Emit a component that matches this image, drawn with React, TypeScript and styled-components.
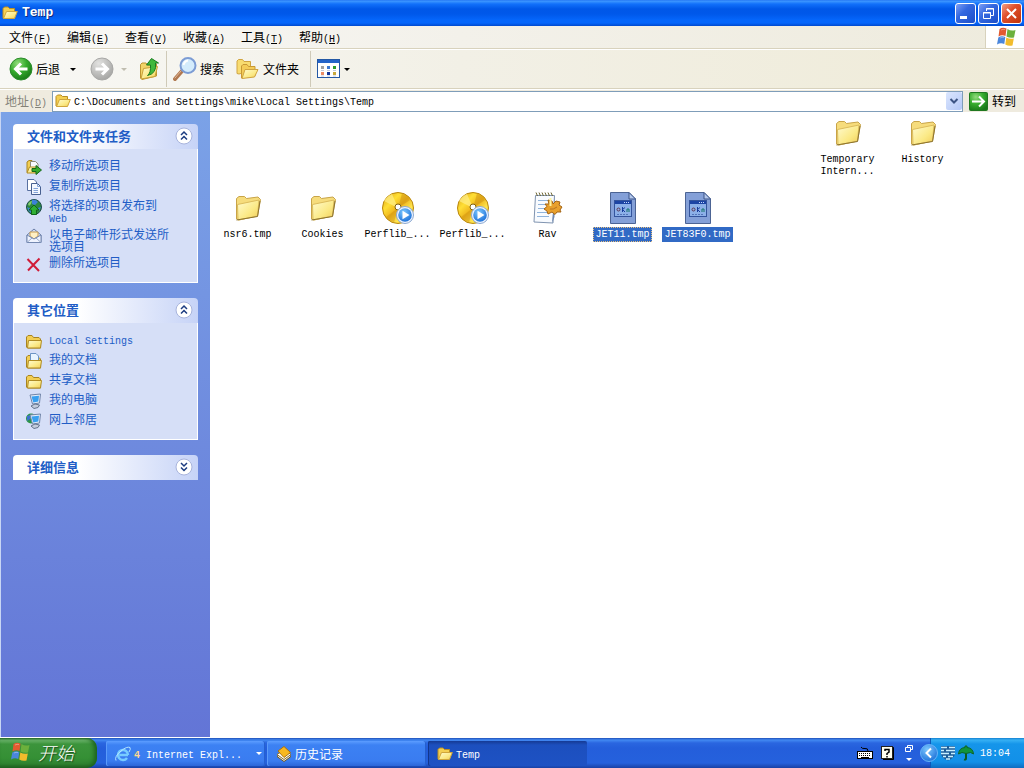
import React from 'react';
import styled, { createGlobalStyle, css } from 'styled-components';

const mono = css`
  font-family: 'Liberation Mono', 'Noto Sans CJK SC', monospace;
  font-size: 10px;
`;

const GlobalStyle = createGlobalStyle`
  * { box-sizing: border-box; }
  body {
    margin: 0;
    font-family: 'Noto Sans CJK SC', sans-serif;
    font-size: 12px;
    line-height: 12px;
    color: #000;
  }
  button {
    font: inherit;
    color: inherit;
    border: 0;
    padding: 0;
    background: none;
  }
  svg { display: block; flex: none; }
`;

const Latin = styled.span`
  ${mono}
  line-height: 8px;
`;

const Desktop = styled.div`
  min-height: 100vh;
  display: flex;
  flex-direction: column;
`;

/* ---------- title bar ---------- */

const TitleBar = styled.header`
  height: 26px;
  display: flex;
  align-items: center;
  gap: 4px;
  padding: 0 2px;
  background: linear-gradient(#1c6cf0 0, #3f98ff 1px, #1170fa 4px, #0057e8 9px, #0058ea 14px, #0566fb 20px, #0566fb 23px, #0049ce 26px);
`;

const Title = styled.h1`
  ${mono}
  flex: 1;
  margin: 0;
  font-size: 13px;
  font-weight: bold;
  color: #fff;
  text-shadow: 1px 1px #0a2a80;
`;

const Caption = styled.div`
  display: flex;
  gap: 2px;
`;

const CaptionButton = styled.button<{ $close?: boolean }>`
  width: 21px;
  height: 21px;
  border: 1px solid #fff;
  border-radius: 3px;
  background: ${(p) =>
    p.$close
      ? 'linear-gradient(135deg, #f0a088, #e0502c 40%, #c0340c)'
      : 'linear-gradient(135deg, #7d9ff5, #3468e0 40%, #1c4ec8)'};
`;

/* ---------- menu, tool bar and address bar ---------- */

const MenuBar = styled.nav`
  height: 23px;
  display: flex;
  align-items: stretch;
  background: linear-gradient(90deg, #f8f8f6, #f3f1ea 45%, #eeebdd);
  border-bottom: 1px solid #d8d2bd;
`;

const MenuItems = styled.div`
  flex: 1;
  display: flex;
  gap: 16px;
  padding: 0 9px;
`;

const MenuItem = styled.button`
  width: 42px;
  white-space: nowrap;
`;

const Throbber = styled.div`
  width: 39px;
  padding: 1px 10px;
  background: #fff;
  border-left: 1px solid #d8d2bd;
`;

const ToolBar = styled.div`
  height: 40px;
  display: flex;
  align-items: center;
  padding: 0 9px;
  border-top: 1px solid #fff;
  border-bottom: 1px solid #d8d2bd;
  background: linear-gradient(90deg, #f8f8f5, #f2f0e6 45%, #efebd8);
`;

const ToolButton = styled.button<{ $width: number }>`
  width: ${(p) => p.$width}px;
  height: 32px;
  flex: none;
  display: flex;
  align-items: center;
  gap: 3px;
  white-space: nowrap;
`;

const DropArrow = styled.span<{ $color?: string; $width?: number }>`
  width: ${(p) => p.$width ?? 6}px;
  display: flex;
  justify-content: center;
  &::after {
    content: '';
    border: 3px solid transparent;
    border-top-color: ${(p) => p.$color ?? '#000'};
    border-bottom: 0;
  }
`;

const Separator = styled.span`
  width: 1px;
  height: 36px;
  margin-right: 6px;
  background: #cfcab8;
`;

const AddressBar = styled.form`
  height: 23px;
  display: flex;
  align-items: center;
  gap: 6px;
  padding: 0 8px 0 5px;
  background: #efebdf;
  border-top: 1px solid #fff;
`;

const AddressLabel = styled.label`
  width: 41px;
  white-space: nowrap;
  color: #848278;
`;

const AddressField = styled.div`
  flex: 1;
  height: 21px;
  display: flex;
  align-items: center;
  gap: 3px;
  padding: 0 0 0 2px;
  background: #fff;
  border: 1px solid #7f9db9;
`;

const AddressInput = styled.input`
  ${mono}
  flex: 1;
  min-width: 0;
  height: 18px;
  border: 0;
  padding: 2px 0 0;
  outline: none;
  background: transparent;
  color: #000;
`;

const AddressDrop = styled.button`
  width: 16px;
  height: 18px;
  display: flex;
  align-items: center;
  justify-content: center;
  border-radius: 2px;
  background: linear-gradient(135deg, #dbe6fe, #b4c8f6);
`;

const GoButton = styled.button`
  display: flex;
  align-items: center;
  gap: 4px;
`;

/* ---------- task pane ---------- */

const Body = styled.div`
  flex: 1;
  display: flex;
  align-items: stretch;
  padding-bottom: 1px;
  background: #fff;
`;

const SidePane = styled.aside`
  width: 210px;
  flex: none;
  display: flex;
  flex-direction: column;
  gap: 15px;
  padding: 12px;
  border-left: 1px solid #c8d6f4;
  background: linear-gradient(#7ba2e7, #6375d6);
`;

const PanelHeader = styled.h2`
  height: 25px;
  display: flex;
  align-items: center;
  justify-content: space-between;
  margin: 0;
  padding: 0 5px 2px 14px;
  border-radius: 4px 4px 0 0;
  background: linear-gradient(90deg, #fff 35%, #c6d3f7);
  color: #215dc6;
  font-size: 13px;
  font-weight: bold;
`;

const PanelList = styled.ul`
  list-style: none;
  margin: 0;
  padding: 10px 12px;
  display: flex;
  flex-direction: column;
  gap: 4px;
  background: #d6dff7;
  border: 1px solid #fff;
  border-top: 0;
`;

const TaskLink = styled.a`
  min-height: 16px;
  display: flex;
  align-items: flex-start;
  gap: 7px;
  color: #215dc6;
  text-decoration: none;
  span { max-width: 125px; }
`;

/* ---------- file view ---------- */

const FileView = styled.main`
  flex: 1;
  display: grid;
  grid-template-columns: repeat(auto-fill, 75px);
  grid-auto-rows: 75px;
  padding: 5px 0 0;
`;

const FileItem = styled.button<{ $column?: number }>`
  ${(p) => p.$column && `grid-column: ${p.$column};`}
  display: flex;
  flex-direction: column;
  align-items: center;
  gap: 3px;
`;

const FileLabel = styled.span<{ $selected?: boolean; $focused?: boolean }>`
  ${mono}
  max-width: 72px;
  padding: 1px 1px 0;
  line-height: 12px;
  border: 1px ${(p) => (p.$focused ? 'dotted #e8c080' : 'solid transparent')};
  background: ${(p) => (p.$selected ? '#316ac5' : 'transparent')};
  color: ${(p) => (p.$selected ? '#fff' : '#000')};
`;

/* ---------- task bar ---------- */

const TaskBar = styled.footer`
  height: 30px;
  display: flex;
  align-items: stretch;
  background: linear-gradient(#1f4fb8 0, #4289f2 2px, #2a66e0 5px, #245edb 10px, #2561dd 25px, #1941a5 30px);
`;

const StartButton = styled.button`
  width: 97px;
  display: flex;
  align-items: center;
  gap: 8px;
  padding: 0 0 2px 10px;
  border-radius: 0 10px 10px 0;
  background: linear-gradient(#2a6b2a 0, #6fb86f 2px, #3c943c 6px, #359035 20px, #2e8230 26px, #1f5f20 30px);
  box-shadow: inset -3px 0 4px #1d641f;
  color: #fff;
  font-size: 18px;
  font-style: italic;
  font-weight: 300;
  line-height: 20px;
  text-shadow: 1px 1px 1px #1c4a1c;
`;

const Tasks = styled.div`
  flex: 1;
  display: flex;
  gap: 2px;
  padding: 3px 0 2px 9px;
`;

const TaskButton = styled.button<{ $active?: boolean }>`
  width: 159px;
  display: flex;
  align-items: center;
  gap: 3px;
  padding: 0 3px 0 9px;
  border-radius: 2px;
  color: #fff;
  white-space: nowrap;
  background: ${(p) =>
    p.$active
      ? 'linear-gradient(#153a94, #1c4fbe 4px, #1e52c4)'
      : 'linear-gradient(#5c9dff, #3c81f3 4px, #3a7cf0 20px, #2c66d8)'};
  box-shadow: ${(p) => (p.$active ? 'inset 1px 0 #12368c' : 'inset 1px 0 #5b9bfa, inset -1px 0 #2560cf')};
`;

const TaskText = styled.span`
  flex: 1;
  text-align: left;
`;

const Count = styled.b`
  color: #ffd890;
`;

const LanguageBar = styled.div`
  display: flex;
  align-items: center;
  gap: 8px;
  padding: 0 17px 0 0;
`;

const LanguageControls = styled.div`
  display: flex;
  flex-direction: column;
  align-items: center;
  gap: 6px;
  padding-left: 3px;
`;

const Tray = styled.div`
  width: 94px;
  display: flex;
  align-items: center;
  gap: 2px;
  background: linear-gradient(#1480d0 0, #36b0f4 2px, #1595ea 6px, #1290e8 24px, #0f6cc0 30px);
  box-shadow: inset 1px 0 #0c58b8;
  color: #fff;
`;

const TrayExpand = styled.button`
  margin-left: -10px;
`;

const Clock = styled.time`
  ${mono}
  flex: 1;
  padding: 2px 0 0 4px;
`;

/* ---------- drawings ---------- */

const Gradients = () => (
  <svg width="0" height="0" style={{ position: 'absolute' }} aria-hidden="true">
    <defs>
      <linearGradient id="folder" x1="0" y1="0" x2="1" y2="1">
        <stop offset="0" stopColor="#fffbd0" />
        <stop offset="0.6" stopColor="#fbe985" />
        <stop offset="1" stopColor="#f0cc58" />
      </linearGradient>
      <linearGradient id="gold" x1="0" y1="0" x2="1" y2="1">
        <stop offset="0" stopColor="#d99a10" />
        <stop offset="0.3" stopColor="#ffdf35" />
        <stop offset="0.5" stopColor="#eeb41c" />
        <stop offset="0.7" stopColor="#ffe650" />
        <stop offset="1" stopColor="#d29210" />
      </linearGradient>
      <radialGradient id="green" cx="0.35" cy="0.25" r="0.8">
        <stop offset="0" stopColor="#92dc7c" />
        <stop offset="0.5" stopColor="#36ac2e" />
        <stop offset="1" stopColor="#187818" />
      </radialGradient>
      <radialGradient id="grey" cx="0.35" cy="0.25" r="0.8">
        <stop offset="0" stopColor="#e2e2e0" />
        <stop offset="1" stopColor="#a4a4a2" />
      </radialGradient>
      <radialGradient id="blue" cx="0.4" cy="0.3" r="0.8">
        <stop offset="0" stopColor="#7cc8ff" />
        <stop offset="1" stopColor="#1468d4" />
      </radialGradient>
    </defs>
  </svg>
);

const Flag = () => (
  <svg width="20" height="20" viewBox="0 0 20 20">
    <path d="M3.500 2 Q6.500 0 10.500 1.500 L9.500 9 Q6 7.500 2.500 9.500Z" fill="#e25a30" />
    <path d="M11.500 2 Q15 4.500 19.500 3 L18 10.500 Q14 11.500 10.500 9.500Z" fill="#6cb03c" />
    <path d="M2.300 10.500 Q5.500 8.500 9.300 10 L8.300 17 Q4.500 15.500 1 17.500Z" fill="#4a86dc" />
    <path d="M10.300 10.500 Q14 12.500 17.800 11.500 L16.500 18.500 Q12.500 19.500 9.300 17.500Z" fill="#f2bc2c" />
    <path d="M5 3 Q7 2 9 2.500 M4 11 Q6 10 8 10.500" stroke="#fff" opacity="0.350" fill="none" />
  </svg>
);

const LargeFolder = () => (
  <svg width="32" height="32" viewBox="0 0 32 32">
    <path d="M4.500 27 V6.500 L7 4.500 H12.500 L14.500 6.500 L26 5 L28.500 7.500 L25.500 24 L7 28Z" fill="#f6dc7c" stroke="#c8a448" />
    <path d="M5.500 12.500 L27 8 L25.500 24 L6 28Z" fill="url(#folder)" stroke="#dcbc5c" />
    <path d="M4.500 28 L25.500 24.500 L28 9" stroke="#8c7430" fill="none" />
  </svg>
);

const SmallFolder = ({ children }: { children?: React.ReactNode }) => (
  <svg width="16" height="16" viewBox="0 0 16 16">
    <path d="M0.500 14 V4 L2 2.500 H6 L7.500 4.500 H13 L14.500 6 V15 H1.500Z" fill="#f2ce54" stroke="#a88420" />
    {children}
    <path d="M1.500 15 L2.500 7.500 H15.500 L14.500 15Z" fill="url(#folder)" stroke="#b08c24" />
  </svg>
);

const OpenFolder = () => (
  <svg width="16" height="16" viewBox="0 0 16 16">
    <path d="M1 13 V3.500 L2.500 2 H6 L7.500 3.500 H12.500 V7 L12 13Z" fill="#f4cf52" stroke="#b98e22" />
    <path d="M1.500 13.500 L4.500 6.500 H15.300 L12.500 13.500Z" fill="url(#folder)" stroke="#d0a63c" />
  </svg>
);

const Disc = () => (
  <svg width="32" height="32" viewBox="0 0 32 32">
    <circle cx="16" cy="16" r="15.500" fill="url(#gold)" stroke="#b8860e" />
    <path d="M16 16 L2 9 A15 15 0 0 1 10 2Z" fill="#fff08c" opacity="0.700" />
    <path d="M16 16 L20 1.500 A15 15 0 0 1 28 8Z" fill="#c88c10" opacity="0.450" />
    <path d="M16 16 L4 25 A15 15 0 0 0 12 30.500Z" fill="#c88c10" opacity="0.400" />
    <circle cx="16" cy="15" r="3" fill="#fff" stroke="#806010" />
    <circle cx="23" cy="23" r="8.500" fill="#eef4ff" stroke="#8ca8d0" />
    <circle cx="23" cy="23" r="6.800" fill="url(#blue)" />
    <path d="M20.500 18.800 L27.500 23 L20.500 27.200Z" fill="#fff" />
  </svg>
);

const ScriptPad = () => (
  <svg width="32" height="32" viewBox="0 0 32 32">
    <path d="M3.500 3.500 H22.500 L21 31 L2 30Z" fill="#f8fbff" stroke="#8094b0" />
    <path d="M22.500 4 V25 L20 31 Z" fill="#7088b0" />
    <path d="M4 0.500 L5.500 4 M7 0.500 L8.500 4 M10 0.500 L11.500 4 M13 0.500 L14.500 4 M16 0.500 L17.500 4 M19 0.500 L20.500 4" stroke="#6c6430" />
    <path d="M6 8.500 H18 M6 12.500 H14 M6 16.500 H13 M5 20.500 H16 M5 24.500 H17" stroke="#90b4dc" />
    <path d="M16 8 L20 9 L21 12 L24 9 L28 10 L27 13 L30 15 L28 18 L29 20 L25 20 L23 22.500 L20 20 L16 22 L15 19 L12 17 L15 14.500 L13 12 L17 12Z" fill="#e8a02c" stroke="#a46414" />
    <path d="M18.500 6 V14" stroke="#fff4a0" strokeWidth="2" />
    <path d="M18 17 Q21 18 25 15" stroke="#b87420" fill="none" />
  </svg>
);

const TempFile = () => (
  <svg width="32" height="32" viewBox="0 0 32 32">
    <path d="M3.500 0.500 H22 L28.500 7 V31.500 H3.500Z" fill="#84a0d8" stroke="#4c6494" />
    <path d="M22 0.500 V7 H28.500Z" fill="#b4c8ec" stroke="#3c5488" />
    <rect x="7.500" y="8.500" width="17" height="16" fill="#8cb0e8" stroke="#34549c" />
    <path d="M8 10.500 H24" stroke="#1c44a4" strokeWidth="3" />
    <path d="M17 10.500 H23" stroke="#c4d8ff" strokeDasharray="1 1" />
    <circle cx="11.500" cy="17.500" r="1.500" fill="none" stroke="#5c3450" />
    <path d="M15.500 15 V20 M18 15.500 L15.500 17.500 L18 20" stroke="#183c9c" fill="none" />
    <path d="M20 20 V17 H22 V20" stroke="#14746c" fill="none" />
    <path d="M10 22.500 H22" stroke="#5474b8" strokeDasharray="2 1" />
  </svg>
);

const RoundArrow = ({ forward }: { forward?: boolean }) => (
  <svg width="24" height="24" viewBox="0 0 24 24">
    <circle cx="12" cy="12" r="11" fill={forward ? 'url(#grey)' : 'url(#green)'} stroke={forward ? '#a8a8a6' : '#2c8c2c'} />
    <path
      d={forward ? 'M5.500 12 H17 M12 6.500 L17.500 12 L12 17.500' : 'M18.500 12 H7 M12 6.500 L6.500 12 L12 17.500'}
      fill="none"
      stroke="#fff"
      strokeWidth="3"
    />
  </svg>
);

const UpFolder = () => (
  <svg width="21" height="24" viewBox="0 0 21 24">
    <path d="M1.500 21 V7.500 L3 6 H7 L8.500 8 L17.500 7 V19 L3 22.500Z" fill="#f2d468" stroke="#bc9430" />
    <path d="M2 22 L4.500 11.500 L18.500 9.500 L16 19.500Z" fill="url(#folder)" stroke="#c8a038" />
    <path d="M8.500 18.500 Q12 16 11.500 8 H7.500 L12.500 1.500 L19.500 6 H16.500 Q18 16.500 8.500 18.500Z" fill="#40b83c" stroke="#187c20" />
  </svg>
);

const Magnifier = () => (
  <svg width="24" height="24" viewBox="0 0 24 24">
    <path d="M2 22 L9 14" stroke="#b07850" strokeWidth="4" strokeLinecap="round" />
    <path d="M2 21 L8 14" stroke="#e0b898" strokeLinecap="round" />
    <circle cx="15" cy="8.500" r="7.500" fill="#d4ecfc" stroke="#7c9cd4" strokeWidth="2" />
    <path d="M10.500 8 Q11.500 4 15 3.500" stroke="#fff" strokeWidth="2" fill="none" />
  </svg>
);

const Folders = () => (
  <svg width="24" height="24" viewBox="0 0 24 24">
    <path d="M1 16.500 V4 L2.500 2.500 H6.500 L8 4.500 H14.500 V14 L3 17Z" fill="#f8dc70" stroke="#d0a440" />
    <path d="M5.500 21 V9 L7 7.500 H11 L12.500 9.500 H19 V19Z" fill="#f4cc58" stroke="#c89834" />
    <path d="M6 21.500 L9 12.500 H22 L18.500 20Z" fill="url(#folder)" stroke="#d0a440" />
  </svg>
);

const Views = () => (
  <svg width="24" height="20" viewBox="0 0 24 20">
    <rect x="0.500" y="0.500" width="22" height="18" fill="#fff" stroke="#2458a4" />
    <rect x="1" y="1" width="21" height="3" fill="#2464c8" />
    <path d="M4 8.500 H7" stroke="#a0a0a0" strokeWidth="3" />
    <path d="M10 8.500 H13" stroke="#3c78d0" strokeWidth="3" />
    <path d="M16 8.500 H19" stroke="#2c9c2c" strokeWidth="3" />
    <path d="M4 14.500 H7" stroke="#ec8c64" strokeWidth="3" />
    <path d="M10 14.500 H13" stroke="#14389c" strokeWidth="3" />
    <path d="M16 14.500 H19" stroke="#c8a83c" strokeWidth="3" />
    <path d="M4 11.500 H7 M10 11.500 H13 M16 11.500 H19 M4 17 H7 M10 17 H13 M16 17 H19" stroke="#c4ccdc" />
  </svg>
);

const Chevrons = ({ down }: { down?: boolean }) => (
  <svg width="18" height="18" viewBox="0 0 18 18">
    <circle cx="9" cy="9" r="8" fill="#fff" stroke="#a8b4dc" />
    <path
      d={down ? 'M6 5 L9 8 L12 5 M6 9.500 L9 12.500 L12 9.500' : 'M6 8 L9 5 L12 8 M6 12.500 L9 9.500 L12 12.500'}
      fill="none"
      stroke="#1c3c80"
      strokeWidth="1.500"
    />
  </svg>
);

const MoveIcon = () => (
  <svg width="16" height="16" viewBox="0 0 16 16">
    <path d="M1 13.500 V3 L3 1.500 H6 V13.500Z" fill="#f2ce54" stroke="#a88420" />
    <path d="M4.500 2.500 H9.500 L12 5 V12.500 H4.500Z" fill="#f8faff" stroke="#8c8c78" />
    <path d="M1 14 L3.500 8 H12 V14Z" fill="url(#folder)" stroke="#b08c24" />
    <path d="M6 9.500 H10 V6.500 L15.500 11 L10 15.500 V12.500 H6Z" fill="#38ac2c" stroke="#146818" />
  </svg>
);

const CopyIcon = () => (
  <svg width="16" height="16" viewBox="0 0 16 16">
    <path d="M1.500 0.500 H8 L10.500 3 V11.500 H1.500Z" fill="#fff" stroke="#5870a0" />
    <path d="M5.500 4.500 H11.500 L14.500 7.500 V15.500 H5.500Z" fill="#f4f8ff" stroke="#486090" />
    <path d="M11.500 4.500 V7.500 H14.500 M7.500 9.500 H12 M7.500 11.500 H12 M7.500 13.500 H12" fill="none" stroke="#84a4d8" />
  </svg>
);

const GlobeIcon = () => (
  <svg width="16" height="16" viewBox="0 0 16 16">
    <circle cx="8" cy="8" r="7.500" fill="#2c8840" stroke="#1c4c48" />
    <path d="M6 1 Q10 0 12 3 L9 6 L6 5Z M1 8 Q2 12 5 14 L5 10Z M15 8 L12 9 L13 12Z" fill="#3c80d8" />
    <path d="M2 5 Q4 1.500 6 2 L5 5 L3 7Z" fill="#84cc70" />
    <path d="M5.500 15.500 V11 H3 L8 6 L13 11 H10.500 V15.500Z" fill="#30b034" stroke="#106418" />
  </svg>
);

const MailIcon = () => (
  <svg width="16" height="16" viewBox="0 0 16 16">
    <path d="M1 7 L8 1 L15 7 V14.500 H1Z" fill="#d0dcf4" stroke="#6c80a8" />
    <path d="M4 8 V4 H12 V8 L8 11Z" fill="#fff0c4" stroke="#c89c50" />
    <path d="M1 7 L8 11 L15 7 V14.500 H1Z" fill="#f0f4ff" stroke="#7488b0" />
    <path d="M1.500 14 L6 10 M14.500 14 L10 10" stroke="#94a8cc" />
  </svg>
);

const DeleteIcon = () => (
  <svg width="16" height="16" viewBox="0 0 16 16">
    <path d="M1.500 3 L13 15 M13.500 2.500 L2 14.500" stroke="#d01c38" strokeWidth="2" />
  </svg>
);

const ComputerIcon = ({ network }: { network?: boolean }) => (
  <svg width="16" height="16" viewBox="0 0 16 16">
    {network && (
      <>
        <circle cx="5" cy="5.500" r="5" fill="#2c9448" />
        <path d="M1 3 L5 2 L4 6 L1 8Z" fill="#3c70d0" />
      </>
    )}
    <path d="M4 2 L14.500 1 L13.500 10 L6.500 11Z" fill="#e4ecf8" stroke="#7084a8" />
    <path d="M5.500 3.500 L13 2.800 L12.300 8.500 L7.300 9.400Z" fill="#38a0f0" />
    <path d="M5 13 L9 11 L13.500 12 L12 14.500 L8 15.500Z" fill="#c4ccdc" stroke="#64748c" />
  </svg>
);

const IeIcon = () => (
  <svg width="16" height="16" viewBox="0 0 16 16">
    <path d="M13 9 H4.500 M13 9 A5 5 0 1 0 12 12" fill="none" stroke="#78ccff" strokeWidth="2.500" />
    <path d="M1 14.500 Q-1 11 6 5 Q12 0 15 1.500 Q16 3 14 6" fill="none" stroke="#b4e4ff" />
  </svg>
);

const StackIcon = () => (
  <svg width="16" height="16" viewBox="0 0 16 16">
    <path d="M1 10.500 L8 15.500 L15 10.500 L8 6Z" fill="#f0f0e8" stroke="#705820" />
    <path d="M1 8.500 L8 13.500 L15 8.500 L8 4Z" fill="#fff" stroke="#907028" />
    <path d="M2 5 L8 0.500 L14.500 6.500 L8 11.500Z" fill="#f8b820" stroke="#a87010" />
  </svg>
);

const KeyboardIcon = () => (
  <svg width="16" height="14" viewBox="0 0 16 14">
    <path d="M4 1 Q5 3 8 2.500 T11 5" fill="none" stroke="#000" />
    <rect x="0.500" y="5.500" width="15" height="7" fill="#fff" stroke="#000" />
    <path d="M2 7.500 H14 M2 9.500 H14" stroke="#000" strokeDasharray="1 1" />
    <path d="M4 11.500 H12" stroke="#000" />
  </svg>
);

const HelpIcon = () => (
  <svg width="13" height="14" viewBox="0 0 13 14">
    <path d="M2 1.500 H12.500 V13.500 H2" stroke="#000" fill="#000" />
    <rect x="0.500" y="0.500" width="11" height="12" fill="#fffef0" stroke="#202020" />
    <path d="M4 5 V3.500 H8 V6 L6 7.500 V9 M6 10 V11.500" stroke="#000" strokeWidth="1.500" fill="none" />
  </svg>
);

const RestoreSmall = () => (
  <svg width="8" height="7" viewBox="0 0 8 7">
    <path d="M2.500 2 V0.500 H7.500 V4.500 H6 M0.500 2.500 H5.500 V6.500 H0.500Z" stroke="#fff" fill="none" />
  </svg>
);

const ShieldIcon = () => (
  <svg width="16" height="16" viewBox="0 0 16 16">
    <path d="M1 1 H15 V9 Q14 13 8 15.500 Q2 13 1 9Z" fill="#1c5c98" />
    <path d="M1 2.500 H7 M9 2.500 H15 M1 5.500 H4 M6 5.500 H15 M1 8.500 H9 M11 8.500 H15 M3 11.500 H6 M8 11.500 H13 M6 14 H10" stroke="#c8f0ff" strokeWidth="1.500" />
  </svg>
);

const UmbrellaIcon = () => (
  <svg width="16" height="16" viewBox="0 0 16 16">
    <path d="M8 6 V13.500 Q8 15 6 14.500" stroke="#0c5c20" strokeWidth="2" fill="none" />
    <path d="M0.500 9 Q1 3 7 2.500 V1 H9 V2.500 Q15 3 15.500 9 L12.500 7.500 L8 8.500 L4 7.500Z" fill="#10943c" stroke="#0c6428" />
  </svg>
);

/* ---------- data ---------- */

const menus = [
  ['文件', 'F'],
  ['编辑', 'E'],
  ['查看', 'V'],
  ['收藏', 'A'],
  ['工具', 'T'],
  ['帮助', 'H'],
];

const tasks = [
  { icon: <MoveIcon />, text: '移动所选项目' },
  { icon: <CopyIcon />, text: '复制所选项目' },
  { icon: <GlobeIcon />, text: '将选择的项目发布到 ', latin: 'Web' },
  { icon: <MailIcon />, text: '以电子邮件形式发送所选项目' },
  { icon: <DeleteIcon />, text: '删除所选项目' },
];

const places = [
  { icon: <SmallFolder />, text: '', latin: 'Local Settings' },
  {
    icon: (
      <SmallFolder>
        <path d="M4.500 9 V0.500 H10 L12.500 3 V9Z" fill="#e8f4ff" stroke="#6c94c4" />
      </SmallFolder>
    ),
    text: '我的文档',
  },
  { icon: <SmallFolder />, text: '共享文档' },
  { icon: <ComputerIcon />, text: '我的电脑' },
  { icon: <ComputerIcon network />, text: '网上邻居' },
];

const files = [
  { name: 'Temporary Intern...', icon: <LargeFolder />, column: 9 },
  { name: 'History', icon: <LargeFolder />, column: 10 },
  { name: 'nsr6.tmp', icon: <LargeFolder />, column: 1 },
  { name: 'Cookies', icon: <LargeFolder /> },
  { name: 'Perflib_...', icon: <Disc /> },
  { name: 'Perflib_...', icon: <Disc /> },
  { name: 'Rav', icon: <ScriptPad /> },
  { name: 'JET11.tmp', icon: <TempFile />, selected: true, focused: true },
  { name: 'JET83F0.tmp', icon: <TempFile />, selected: true },
];

type PanelEntry = { icon: React.ReactNode; text: string; latin?: string };

const Panel = ({ title, entries }: { title: string; entries?: PanelEntry[] }) => (
  <section>
    <PanelHeader>
      {title}
      <button type="button" aria-label={title}>
        <Chevrons down={!entries} />
      </button>
    </PanelHeader>
    {entries && (
      <PanelList>
        {entries.map((entry) => (
          <li key={entry.text + (entry.latin ?? '')}>
            <TaskLink href="#">
              {entry.icon}
              <span>
                {entry.text}
                {entry.latin && <Latin>{entry.latin}</Latin>}
              </span>
            </TaskLink>
          </li>
        ))}
      </PanelList>
    )}
  </section>
);

export default function App() {
  return (
    <Desktop>
      <GlobalStyle />
      <Gradients />
      <TitleBar>
        <OpenFolder />
        <Title>Temp</Title>
        <Caption>
          <CaptionButton type="button" aria-label="最小化">
            <svg width="19" height="19" viewBox="0 0 19 19"><path d="M4 13.500 H11" stroke="#fff" strokeWidth="3" /></svg>
          </CaptionButton>
          <CaptionButton type="button" aria-label="还原">
            <svg width="19" height="19" viewBox="0 0 19 19">
              <path d="M7.500 7 V4.500 H14.500 V11.500 H12 M4.500 8.500 H11.500 V14.500 H4.500Z M4 9 H12 M7 5 H15" stroke="#fff" fill="none" />
            </svg>
          </CaptionButton>
          <CaptionButton type="button" $close aria-label="关闭">
            <svg width="19" height="19" viewBox="0 0 19 19"><path d="M5 5 L14 14 M14 5 L5 14" stroke="#fff" strokeWidth="2" /></svg>
          </CaptionButton>
        </Caption>
      </TitleBar>

      <MenuBar>
        <MenuItems>
          {menus.map(([label, key]) => (
            <MenuItem key={key} type="button">
              {label}
              <Latin>(<u>{key}</u>)</Latin>
            </MenuItem>
          ))}
        </MenuItems>
        <Throbber><Flag /></Throbber>
      </MenuBar>

      <ToolBar>
        <ToolButton type="button" $width={81}>
          <RoundArrow />
          后退
          <DropArrow $width={20} />
        </ToolButton>
        <ToolButton type="button" $width={49}>
          <RoundArrow forward />
          <DropArrow $width={14} $color="#c0bdb0" />
        </ToolButton>
        <ToolButton type="button" $width={27} aria-label="向上"><UpFolder /></ToolButton>
        <Separator />
        <ToolButton type="button" $width={63}>
          <Magnifier />
          搜索
        </ToolButton>
        <ToolButton type="button" $width={74}>
          <Folders />
          文件夹
        </ToolButton>
        <Separator />
        <ToolButton type="button" $width={36} aria-label="查看">
          <Views />
          <DropArrow />
        </ToolButton>
      </ToolBar>

      <AddressBar onSubmit={(e) => e.preventDefault()}>
        <AddressLabel htmlFor="address">
          地址<Latin>(<u>D</u>)</Latin>
        </AddressLabel>
        <AddressField>
          <OpenFolder />
          <AddressInput id="address" defaultValue="C:\Documents and Settings\mike\Local Settings\Temp" />
          <AddressDrop type="button" aria-label="地址列表">
            <svg width="10" height="8" viewBox="0 0 10 8"><path d="M1.500 2 L5 5.500 L8.500 2" fill="none" stroke="#3c5484" strokeWidth="2" /></svg>
          </AddressDrop>
        </AddressField>
        <GoButton type="submit">
          <svg width="19" height="19" viewBox="0 0 19 19">
            <rect x="0.500" y="0.500" width="18" height="18" rx="1" fill="url(#green)" stroke="#207820" />
            <path d="M3 9.500 H15 M10 4.500 L15 9.500 L10 14.500" stroke="#fff" strokeWidth="2" fill="none" />
          </svg>
          转到
        </GoButton>
      </AddressBar>

      <Body>
        <SidePane>
          <Panel title="文件和文件夹任务" entries={tasks} />
          <Panel title="其它位置" entries={places} />
          <Panel title="详细信息" />
        </SidePane>
        <FileView>
          {files.map((file, i) => (
            <FileItem key={i} type="button" $column={file.column}>
              {file.icon}
              <FileLabel $selected={file.selected} $focused={file.focused}>{file.name}</FileLabel>
            </FileItem>
          ))}
        </FileView>
      </Body>

      <TaskBar>
        <StartButton type="button">
          <Flag />
          开始
        </StartButton>
        <Tasks>
          <TaskButton type="button">
            <IeIcon />
            <TaskText><Latin><Count>4</Count> Internet Expl...</Latin></TaskText>
            <DropArrow $color="#fff" />
          </TaskButton>
          <TaskButton type="button">
            <StackIcon />
            <TaskText>历史记录</TaskText>
          </TaskButton>
          <TaskButton type="button" $active>
            <OpenFolder />
            <TaskText><Latin>Temp</Latin></TaskText>
          </TaskButton>
        </Tasks>
        <LanguageBar>
          <KeyboardIcon />
          <HelpIcon />
          <LanguageControls>
            <RestoreSmall />
            <DropArrow $color="#fff" />
          </LanguageControls>
        </LanguageBar>
        <Tray>
          <TrayExpand type="button" aria-label="显示隐藏的图标">
            <svg width="18" height="18" viewBox="0 0 18 18">
              <circle cx="9" cy="9" r="8.500" fill="url(#blue)" stroke="#68b4f8" />
              <path d="M11 4.500 L6.500 9 L11 13.500" fill="none" stroke="#fff" strokeWidth="2" />
            </svg>
          </TrayExpand>
          <ShieldIcon />
          <UmbrellaIcon />
          <Clock>18:04</Clock>
        </Tray>
      </TaskBar>
    </Desktop>
  );
}
